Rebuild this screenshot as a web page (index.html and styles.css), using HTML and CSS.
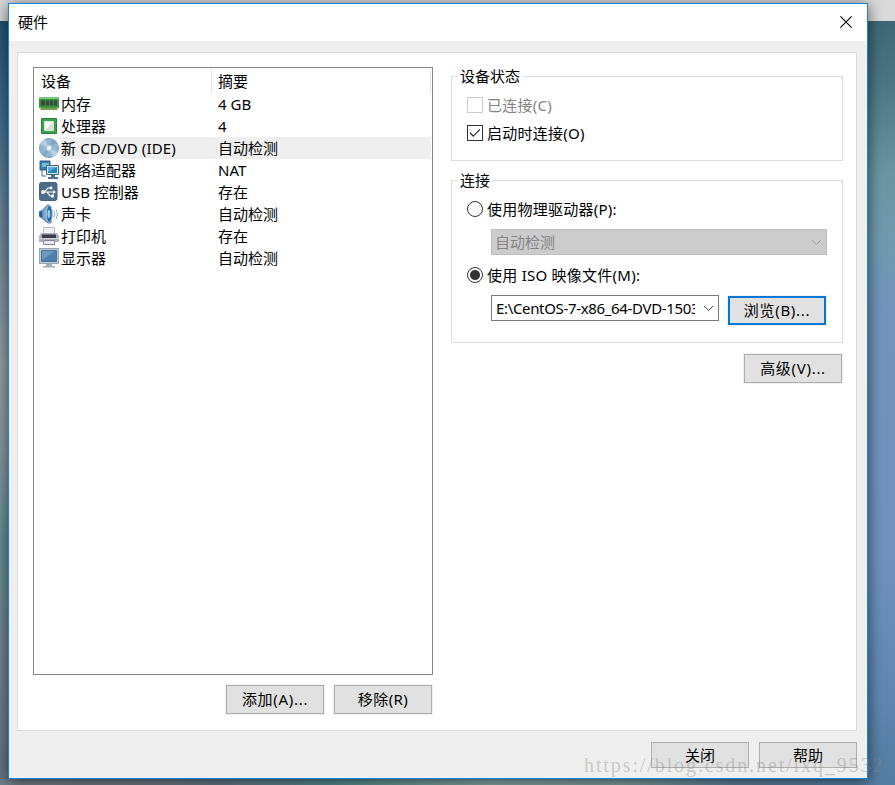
FILE: index.html
```html
<!DOCTYPE html>
<html lang="zh-CN">
<head>
<meta charset="utf-8">
<title>硬件</title>
<link rel="stylesheet" href="styles.css">
</head>
<body>
<div class="desktop">
<div class="edge edge-top"></div>
<div class="edge edge-left"></div>
<div class="edge edge-right"></div>
<div class="edge edge-bottom"></div>
<main class="dialog">
  <header class="titlebar">
    <span>硬件</span>
    <svg class="close" width="12" height="12" viewBox="0 0 12 12"><path d="M.4.4 11.6 11.6M11.6.4.4 11.6" stroke="#000" stroke-width="1.1"/></svg>
  </header>
  <section class="panel">
    <div class="left">
      <div class="list">
        <div class="row head"><span class="name">设备</span><span class="sum">摘要</span></div>
        <div class="row">
          <svg class="icon" width="20" height="20" viewBox="0 0 20 20"><path d="M0 3h20v11H0z" fill="#2f9540"/><path d="M0 3h20v2H0z" fill="#79c983"/><path d="M2 6.500h4v5H2zM7 6.500h3v5H7zM11 6.500h3v5h-3zM15 6.500h3v5h-3z" fill="#41443f"/><path d="M1 13.500h18V16H1z" fill="#d9ce70"/><path d="M3 13v3M5 13v3M7 13v3M9 13v3M11 13v3M13 13v3M15 13v3M17 13v3" stroke="#1c7031"/></svg>
          <span class="name">内存</span><span class="sum">4 GB</span></div>
        <div class="row">
          <svg class="icon" width="20" height="20" viewBox="0 0 20 20"><path d="M2.500 2.500h15v15h-15z" fill="#38a34c" stroke="#278038"/><path d="M5.500 5.500h9v9h-9z" fill="#f4f6f4" stroke="#d3e5d6"/><path d="M6 14 14 7v7z" fill="#dadfda"/></svg>
          <span class="name">处理器</span><span class="sum">4</span></div>
        <div class="row selected">
          <svg class="icon" width="20" height="20" viewBox="0 0 20 20"><circle cx="10" cy="10" r="9.500" fill="#92b6d3" stroke="#789fbd"/><path d="M10 10 1 6A10 10 0 0 1 6 1zM10 10l9 4a10 10 0 0 1-5 5z" fill="#b5d0e4"/><path d="m10 10 3-9a10 10 0 0 1 5 4zM10 10l-7 6a10 10 0 0 0 4 3z" fill="#80a8c9"/><circle cx="10" cy="10" r="3" fill="#d5e3ec" stroke="#adc5d7"/><circle cx="10" cy="10" r="1.400" fill="#f7fafc"/></svg>
          <span class="name wide">新 CD/DVD (IDE)</span><span class="sum">自动检测</span></div>
        <div class="row">
          <svg class="icon" width="20" height="20" viewBox="0 0 20 20"><path d="M1 1h10v9H1z" fill="#2e81b8" stroke="#345c78"/><path d="M3 3h7v4H3z" fill="#77bae0"/><path d="M3 10v6h4" fill="none" stroke="#426982"/><path d="M7.500 5.500h12v9h-12z" fill="#d6e5ee" stroke="#3e637e"/><path d="M9 7h9v6H9z" fill="#2582bd"/><path d="m9 7h9l-9 5z" fill="#5baede"/><path d="M12 15h4v2h3v2H9v-2h3z" fill="#547287"/></svg>
          <span class="name">网络适配器</span><span class="sum">NAT</span></div>
        <div class="row">
          <svg class="icon" width="20" height="20" viewBox="0 0 20 20"><rect x=".5" y=".5" width="17.500" height="18" rx="2" fill="#4d6d89" stroke="#466480"/><path d="M3 10h12M5 10l4-4h3M8 10l3 4h2" fill="none" stroke="#fff" stroke-width="1.200"/><circle cx="4" cy="10" r="1.900" fill="#fff"/><circle cx="12" cy="6" r="1.400" fill="#fff"/><path d="m14 8 3 2-3 2zM12 12.500h3v3h-3z" fill="#fff"/></svg>
          <span class="name">USB 控制器</span><span class="sum">存在</span></div>
        <div class="row">
          <svg class="icon" width="20" height="20" viewBox="0 0 20 20"><path d="M.5 7.500 3 6.500 9 .7l3 2v16L9 19l-6-5-2.500-1.500z" fill="#86a8c4" stroke="#416d96"/><path d="M1 7.500h2.500v5.500H1z" fill="#295b9a"/><ellipse cx="10.300" cy="10" rx="3" ry="8.500" fill="#2268ab" stroke="#a9c4da"/><ellipse cx="9.800" cy="10" rx="1.400" ry="4" fill="#9acded"/><path d="M14.800 6.500q2.200 3.500 0 7M17 5q3 5 0 10" fill="none" stroke="#8eb6d3"/></svg>
          <span class="name">声卡</span><span class="sum">自动检测</span></div>
        <div class="row">
          <svg class="icon" width="20" height="20" viewBox="0 0 20 20"><path d="M4.500 1.500h11v8h-11z" fill="#f0f0f4" stroke="#bbbcc8"/><path d="M2 7h16l2 3v6H0v-6z" fill="#b1aec0"/><path d="M3 8.500h14V12H3z" fill="#393b46"/><path d="M0 12h20v1H0z" fill="#d2d0dc"/><path d="M4.500 14.500h11v4h-11z" fill="#e9eaf1" stroke="#85839a"/><path d="M16.500 13h2v1h-2z" fill="#74c574"/></svg>
          <span class="name">打印机</span><span class="sum">存在</span></div>
        <div class="row">
          <svg class="icon" width="20" height="20" viewBox="0 0 20 20"><path d="M.5.500h19v15H.5z" fill="#c1cdd6" stroke="#95a5b1"/><path d="M2.500 2.500h15v11h-15z" fill="#4d7faf" stroke="#46709a"/><path d="M3 3h13L3 12z" fill="#6e98c0"/><path d="M7 16h6v2h3v1.500H4V18h3z" fill="#a1aebb"/></svg>
          <span class="name">显示器</span><span class="sum">自动检测</span></div>
      </div>
      <div class="list-actions"><div class="button dots">添加(A)...</div><div class="button remove">移除(R)</div></div>
    </div>
    <div class="right">
      <fieldset class="group status">
        <legend>设备状态</legend>
        <div class="option disabled"><span class="box"></span>已连接(C)</div>
        <div class="option second"><span class="box"><svg width="14" height="14" viewBox="0 0 14 14"><path d="m2 6.800 3.300 3.300L12 3.400" fill="none" stroke="#333" stroke-width="1.300"/></svg></span>启动时连接(O)</div>
      </fieldset>
      <fieldset class="group connection">
        <legend>连接</legend>
        <div class="option"><span class="radio"></span>使用物理驱动器(P):</div>
        <div class="combo muted"><span>自动检测</span><svg width="11" height="7" viewBox="0 0 11 7"><path d="m1 1 4.500 4.500L10 1" fill="none" stroke="#a0a0a0"/></svg></div>
        <div class="option iso"><span class="radio on"></span>使用 ISO 映像文件(M):</div>
        <div class="file-row">
          <div class="combo"><span class="path">E:\CentOS-7-x86_64-DVD-1503</span><svg width="11" height="7" viewBox="0 0 11 7"><path d="m1 1 4.500 4.500L10 1" fill="none" stroke="#444"/></svg></div>
          <div class="button focus dots">浏览(B)...</div>
        </div>
      </fieldset>
      <div class="button advanced dots">高级(V)...</div>
    </div>
  </section>
  <footer class="footer"><div class="button">关闭</div><div class="button">帮助</div></footer>
</main>
<div class="watermark">https://blog.csdn.net/lxq_9532</div>
</div>
</body>
</html>
```
FILE: styles.css
```css
* { box-sizing: border-box; }
body { margin: 0; overflow: hidden; font: 15px/22px "Noto Sans", "Noto Sans CJK SC", sans-serif; color: #000; }
svg { display: block; flex: none; }
.desktop { position: relative; width: 895px; height: 785px; padding: 3px 27px 6px 8px; background: #5d7d91; overflow: hidden; }
.edge { position: absolute; }
.edge-top { left: 0; top: 0; width: 895px; height: 21px; background: #dadada; }
.edge-left { left: 0; top: 21px; width: 8px; height: 764px; background: linear-gradient(#235472, #48708f 14%, #68839a 24%, #98a0a4 45%, #8e9ba0 55%, #668f9b 68%, #74868f 82%, #68737f); }
.edge-right { left: 868px; top: 21px; width: 27px; height: 764px; background: linear-gradient(#3e6878, #4c7683 8%, #6c95a2 20%, #709aaf 28%, #7295bd 38%, #7092bf 70%, #5e86b0 90%, #527ca0); }
.edge-bottom { left: 0; top: 779px; width: 895px; height: 6px; background: linear-gradient(90deg, #70808b, #717983 12%, #637986 25%, #558b8f 37%, #86a7a1 55%, #7b9b9b 70%, #5d7f99 82%, #527da3); }
.dialog { position: relative; width: 860px; height: 776px; border: 1px solid #1883d7; background: #efefef; box-shadow: 0 2px 14px #0009; }
.titlebar { height: 37px; padding: 0 15px 1px 9px; display: flex; align-items: center; justify-content: space-between; background: #fff; }
.panel { width: 840px; height: 679px; margin: 11px 0 0 8px; border: 1px solid #dcdcdc; background: #fff; display: flex; padding: 14px 13px 0 15px; gap: 18px; }
.left { width: 400px; }
.list { height: 608px; border: 1px solid #828790; padding: 1px; }
.row { height: 22px; display: flex; align-items: center; padding-left: 4px; white-space: nowrap; }
.head { height: 24px; padding-left: 6px; }
.head .name { width: 171px; border-right: 1px solid #e3e3e3; line-height: 24px; }
.head .sum { flex: 1; border-right: 1px solid #e3e3e3; line-height: 24px; padding-left: 6px; }
.icon { margin-right: 2px; }
.row:not(.head) .name { width: 157px; }
.row .wide { letter-spacing: .14px; }
.selected { background: linear-gradient(90deg, #fff 25px, #efefef 25px); }
.list-actions { display: flex; justify-content: flex-end; gap: 8px; margin-top: 9px; }
.button { width: 100px; height: 31px; padding-bottom: 2px; border: 1px solid #f0f0f0; background: #e1e1e1; box-shadow: inset 0 0 0 1px #adadad; display: flex; align-items: center; justify-content: center; }
.dots { letter-spacing: .7px; }
.remove { letter-spacing: .4px; }
.right { width: 392px; }
.group { margin: 0; padding: 0; border: 1px solid #dcdcdc; min-width: 0; }
.group legend { float: left; height: 22px; margin: -12px 0 0 6px; padding: 0 3px 0 2px; background: #fff; }
.status { height: 85px; margin-top: 9px; }
.connection { height: 163px; margin-top: 19px; }
.option { clear: both; display: flex; align-items: center; gap: 4px; height: 22px; padding-left: 15px; letter-spacing: .25px; }
.status .option.disabled { margin-top: 17px; }
.status .second { margin-top: 6px; }
.disabled { color: #838383; }
.box, .radio { width: 16px; height: 16px; border: 1px solid #333; background: #fff; flex: none; }
.disabled .box { border-color: #ccc; }
.radio { border-radius: 50%; }
.on { background: radial-gradient(circle, #333 4.500px, #fff 5.500px); }
.connection .option { margin-top: 17px; }
.combo { width: 336px; height: 26px; margin: 9px 0 0 39px; border: 1px solid #7a7a7a; background: #fff; display: flex; align-items: center; justify-content: space-between; padding: 0 4px; }
.muted { border-color: #bfbfbf; background: #ccc; color: #838383; padding-left: 3px; }
.connection .iso { margin-top: 9px; }
.path { width: 199px; overflow: hidden; white-space: nowrap; letter-spacing: -.34px; }
.file-row { display: flex; margin-top: 9px; padding-left: 39px; gap: 8px; }
.file-row .combo { width: 228px; margin: 0; }
.focus { box-shadow: inset 0 0 0 2px #0078d7; }
.advanced { margin: 10px 0 0 292px; }
.footer { display: flex; justify-content: flex-end; gap: 10px; padding: 11px 10px 0 0; }
.footer .button { width: 98px; height: 26px; border: 0; padding: 0; }
.watermark { position: absolute; left: 584px; top: 752px; font: 20px/26px "Liberation Serif", serif; letter-spacing: 1.9px; color: #8b8b8366; white-space: nowrap; }
```
